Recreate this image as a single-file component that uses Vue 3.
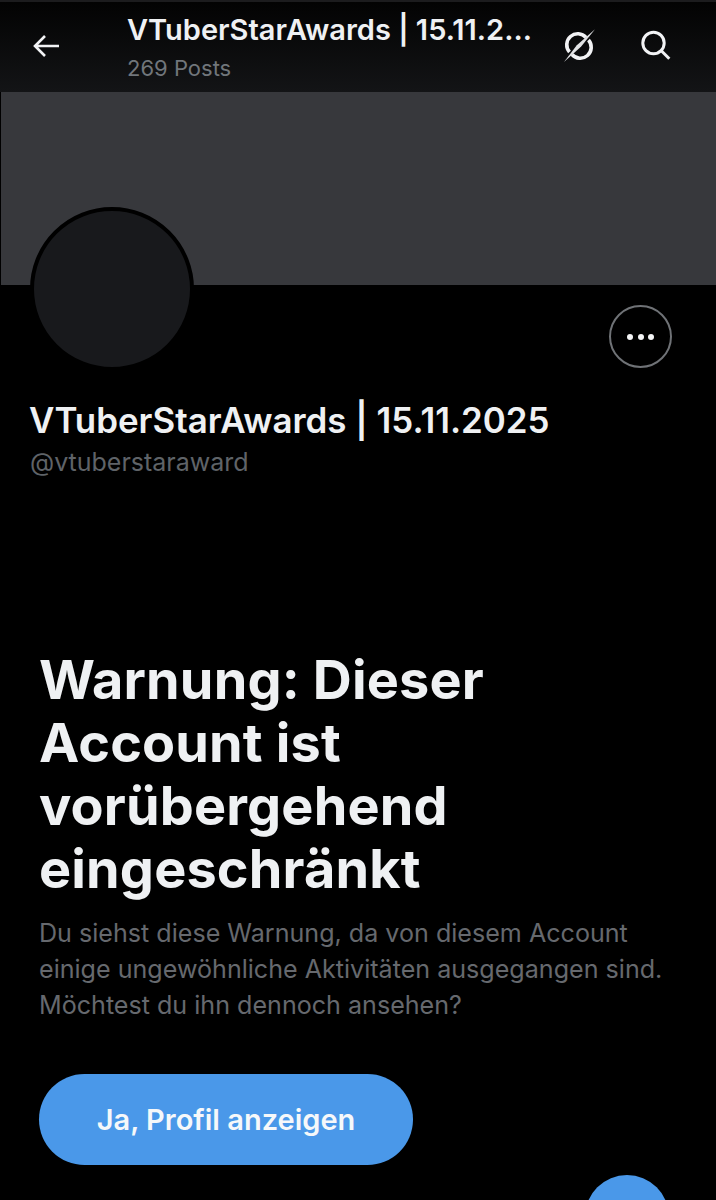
<script setup>
const title = 'VTuberStarAwards | 15.11.2025'
const lines = ['Warnung: Dieser', 'Account ist', 'vorübergehend', 'eingeschränkt']
</script>

<template>
  <div class="page">
    <header class="top">
      <button class="icon back" aria-label="Zurück">
        <svg width="30" height="30" viewBox="0 0 30 30" fill="none" stroke="#f2f3f5" stroke-width="2.6">
          <path d="M28 15H4M14 5 4 15l10 10" />
        </svg>
      </button>
      <div class="titles">
        <div class="t1">VTuberStarAwards | 15.11.2...</div>
        <div class="t2">269 Posts</div>
      </div>
      <button class="icon grok" aria-label="Grok">
        <svg width="36" height="36" viewBox="0 0 36 36" fill="none">
          <path d="M8.500 24A10.800 10.800 0 0 1 25 9.500" stroke="#f2f3f5" stroke-width="3.600" />
          <path d="M27.500 12A10.800 10.800 0 0 1 11 26.500" stroke="#f2f3f5" stroke-width="3.600" />
          <path d="M34 1.300 15.800 17.300 3 34l17.200-15.500z" fill="#e2e3e5" />
        </svg>
      </button>
      <button class="icon search" aria-label="Suche">
        <svg width="32" height="32" viewBox="0 0 32 32" fill="none" stroke="#f2f3f5" stroke-width="3">
          <circle cx="14.500" cy="13" r="10.700" />
          <path d="m22.300 20.800 8 8" />
        </svg>
      </button>
    </header>

    <div class="banner"></div>

    <section class="profile">
      <div class="profile-top">
        <div class="avatar"></div>
        <button class="more" aria-label="Mehr">
          <span></span><span></span><span></span>
        </button>
      </div>
      <h2 class="name">{{ title }}</h2>
      <p class="handle">@vtuberstaraward</p>
    </section>

    <section class="warn">
      <h1>
        <span v-for="l in lines" :key="l">{{ l }}</span>
      </h1>
      <p>Du siehst diese Warnung, da von diesem Account einige ungewöhnliche Aktivitäten ausgegangen sind. Möchtest du ihn dennoch ansehen?</p>
      <button class="cta">Ja, Profil anzeigen</button>
    </section>

    <div class="fab"></div>
  </div>
</template>

<style>
html, body { background: #000; margin: 0; }
</style>

<style scoped>
.page {
  position: relative;
  width: 716px;
  height: 1200px;
  overflow: hidden;
  background: #000;
  color: #eff1f3;
  font-family: Inter, "Noto Sans", sans-serif;
}
button { border: 0; background: none; padding: 0; color: inherit; font: inherit; }
.top {
  height: 90px;
  border-top: 2px solid #1c1c1e;
  display: flex;
  align-items: center;
  background: linear-gradient(#030303, #131416);
}
.icon { display: flex; align-items: center; justify-content: center; flex: none; margin-top: -2px; }
.back { width: 30px; margin-left: 31px; }
.titles { width: 410px; margin-left: 66px; }
.t1 { font-size: 29px; line-height: 34px; font-weight: 600; color: #eff1f3; white-space: nowrap; }
.t2 { font-size: 22px; line-height: 28px; color: #71767b; margin-top: 7px; }
.grok { width: 36px; margin-left: 24px; }
.search { width: 32px; margin-left: 42px; }
.banner { height: 193px; margin-left: 1px; background: #37383c; }
.profile { padding: 0 30px; }
.profile-top { display: flex; justify-content: space-between; align-items: flex-start; height: 114px; }
.avatar {
  width: 156px; height: 156px;
  margin-top: -78px;
  border: 4px solid #000;
  border-radius: 50%;
  background: #18191c;
  flex: none;
}
.more {
  width: 63px; height: 63px;
  margin: 20px 14px 0 0;
  border: 2px solid #6f7276;
  border-radius: 50%;
  box-sizing: border-box;
  display: flex; align-items: center; justify-content: center; gap: 4.500px;
}
.more span { width: 6px; height: 6px; border-radius: 50%; background: #f4f5f6; }
.name { margin: 0 0 0 -1px; font-size: 34.900px; line-height: 42px; font-weight: 600; color: #eff1f3; white-space: nowrap; }
.handle { margin: 6px 0 0; font-size: 25px; line-height: 30px; color: #5f6368; }
.warn { padding: 171px 39px 0; }
.warn h1 { margin: 0; font-size: 54px; line-height: 63px; font-weight: 700; letter-spacing: .15px; color: #eff1f3; }
.warn h1 span { display: block; white-space: nowrap; }
.warn p { margin: 15px 0 0; width: 650px; font-size: 25.100px; line-height: 36px; color: #66696e; }
.cta {
  display: block;
  width: 374px; height: 91px;
  margin: 51px 0 0;
  border-radius: 46px;
  background: #4a98e9;
  color: #f6f8fa;
  font-size: 29px;
  font-weight: 600;
  text-align: center;
}
.fab {
  position: absolute;
  left: 585px; top: 1175px;
  width: 84px; height: 84px;
  border-radius: 50%;
  background: #4a98e9;
}
</style>
